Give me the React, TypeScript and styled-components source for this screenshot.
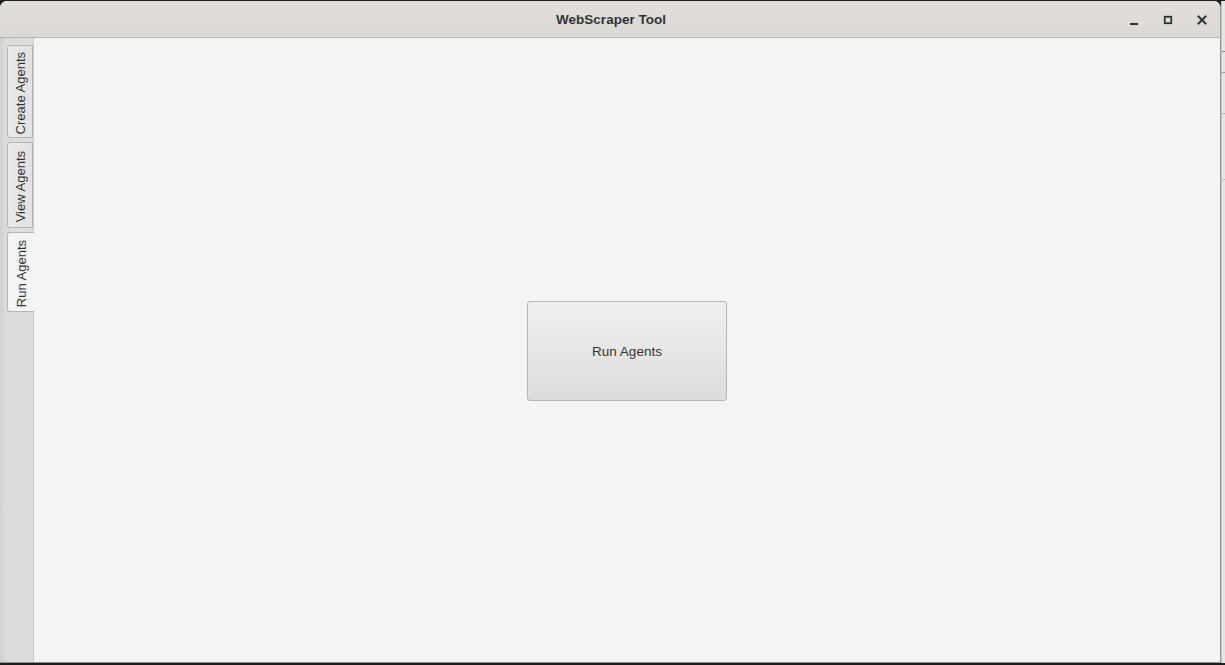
import React, { useState } from "react";
import styled, { createGlobalStyle } from "styled-components";

const Global = createGlobalStyle`
  html, body { margin: 0; padding: 0; }
  body {
    background: #1e1e1e;
    font-family: "Liberation Sans", Arial, sans-serif;
    overflow: hidden;
  }
  #root { height: 665px; }
`;

const Screen = styled.div`
  display: flex;
  height: 665px;
  padding-top: 1px;
  box-sizing: border-box;
  background: #1e1e1e;
`;

const Window = styled.div`
  width: 1221px;
  height: 662px;
  display: flex;
  flex-direction: column;
  border-radius: 7px 7px 0 0;
  overflow: hidden;
  background: #f4f4f4;
  border-right: 1px solid #9a9a9a;
  border-bottom: 1px solid #8f8f8f;
  box-sizing: border-box;
  flex-shrink: 0;
`;

const Behind = styled.div`
  flex: 1;
  height: 662px;
  display: flex;
  flex-direction: column;
  background: #e6e6e6;
  border-left: 1px solid #c4c4c4;
`;

const BehindLine = styled.div<{ $h: number; $c: string }>`
  height: ${(p) => p.$h}px;
  border-bottom: 1px solid ${(p) => p.$c};
`;

const TitleBar = styled.div`
  height: 37px;
  flex-shrink: 0;
  display: flex;
  align-items: center;
  position: relative;
  background: linear-gradient(#e2dfdb, #dcd9d5);
  border-bottom: 1px solid #b9b5b0;
  box-sizing: border-box;
`;

const Title = styled.div`
  flex: 1;
  text-align: center;
  font-weight: bold;
  font-size: 13.5px;
  color: #2e3436;
  padding-left: 2px;
`;

const Controls = styled.div`
  position: absolute;
  right: 7px;
  top: 8px;
  display: flex;
  gap: 12px;
`;

const CtrlBtn = styled.div`
  width: 22px;
  height: 22px;
  display: flex;
  align-items: center;
  justify-content: center;
`;

const Body = styled.div`
  flex: 1;
  display: flex;
  min-height: 0;
`;

const TabStrip = styled.div`
  width: 34px;
  flex-shrink: 0;
  display: flex;
  flex-direction: column;
  align-items: flex-end;
  padding-top: 7px;
  gap: 4px;
  box-sizing: border-box;
  background: linear-gradient(to right, #d1d1d1, #dcdcdc 20%, #dddddd);
  border-right: 1px solid #c9c9c9;
`;

const Tab = styled.div<{ $active?: boolean; $h: number }>`
  width: ${(p) => (p.$active ? 27 : 26)}px;
  height: ${(p) => p.$h}px;
  margin-right: ${(p) => (p.$active ? -1 : 0)}px;
  box-sizing: border-box;
  display: flex;
  align-items: center;
  justify-content: center;
  border: 1px solid #b4b4b4;
  border-right: ${(p) => (p.$active ? "none" : "1px solid #b4b4b4")};
  border-radius: 3px 0 0 3px;
  background: ${(p) =>
    p.$active ? "#f4f4f4" : "linear-gradient(to right, #e9e9e9, #e2e2e2)"};
  cursor: default;
`;

const TabLabel = styled.span`
  writing-mode: vertical-rl;
  transform: rotate(180deg);
  font-size: 13px;
  color: #333333;
  white-space: nowrap;
  margin-top: 3px;
`;

const Content = styled.div`
  flex: 1;
  display: flex;
  align-items: center;
  justify-content: center;
  background: #f4f4f4;
`;

const RunButton = styled.button`
  width: 200px;
  height: 100px;
  margin-top: 2px;
  border: 1px solid #b3b3b3;
  border-radius: 3px;
  background: linear-gradient(#f0f0f0, #dcdcdc);
  font-family: "Liberation Sans", Arial, sans-serif;
  font-size: 13.5px;
  color: #333333;
  cursor: default;
`;

const tabs = [
  { label: "Create Agents", h: 93 },
  { label: "View Agents", h: 86 },
  { label: "Run Agents", h: 80 },
];

export default function App() {
  const [active, setActive] = useState(2);
  return (
    <>
      <Global />
      <Screen>
        <Window>
          <TitleBar>
            <Title>WebScraper Tool</Title>
            <Controls>
              <CtrlBtn>
                <svg width="12" height="12" viewBox="0 0 12 12">
                  <rect x="2" y="9" width="8" height="2" fill="#2e3436" />
                </svg>
              </CtrlBtn>
              <CtrlBtn>
                <svg width="12" height="12" viewBox="0 0 12 12">
                  <rect x="2.75" y="2.75" width="6.5" height="6.5" fill="none" stroke="#2e3436" strokeWidth="1.8" />
                </svg>
              </CtrlBtn>
              <CtrlBtn>
                <svg width="12" height="12" viewBox="0 0 12 12">
                  <path d="M2.5 2.5 L9.5 9.5 M9.5 2.5 L2.5 9.5" stroke="#2e3436" strokeWidth="2" strokeLinecap="square" />
                </svg>
              </CtrlBtn>
            </Controls>
          </TitleBar>
          <Body>
            <TabStrip>
              {tabs.map((t, i) => (
                <Tab key={t.label} $h={t.h} $active={i === active} onClick={() => setActive(i)}>
                  <TabLabel>{t.label}</TabLabel>
                </Tab>
              ))}
            </TabStrip>
            <Content>
              <RunButton>Run Agents</RunButton>
            </Content>
          </Body>
        </Window>
        <Behind>
          <BehindLine $h={50} $c="#8a7f66" />
          <BehindLine $h={20} $c="#9a9a9a" />
          <BehindLine $h={40} $c="#b0b0b0" />
          <BehindLine $h={65} $c="#b8b8b8" />
        </Behind>
      </Screen>
    </>
  );
}
